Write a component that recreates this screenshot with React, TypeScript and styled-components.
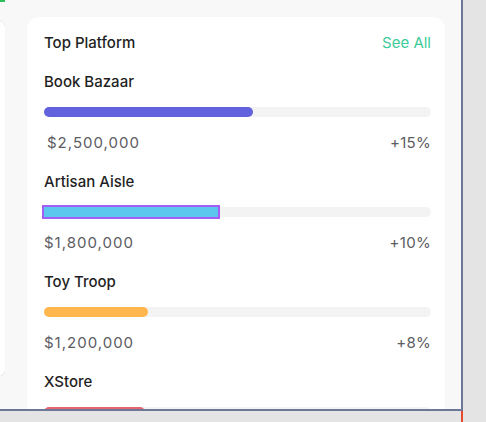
import React from "react";
import styled, { createGlobalStyle } from "styled-components";

const Global = createGlobalStyle`
  html, body { margin: 0; padding: 0; }
  body { background: #e4e4e4; font-family: Inter, "Noto Sans", sans-serif; }
`;

const Frame = styled.div`
  width: 461px;
  height: 409px;
  background: #f8f8f8;
  border-right: 2px solid #6e7797;
  border-bottom: 2px solid #6e7797;
  overflow: hidden;
  display: flex;
  align-items: flex-start;
  gap: 22px;
`;

const LeftCol = styled.div`
  width: 5px;
  flex: none;
  display: flex;
  flex-direction: column;
  overflow: hidden;
`;

const GreenTick = styled.div`
  width: 5px;
  height: 2px;
  background: #2fbf5a;
`;

const LeftCard = styled.div`
  margin-top: 18px;
  margin-left: -200px;
  width: 204px;
  height: 355px;
  background: #ffffff;
  border: 1px solid #e6e9f0;
  border-radius: 8px;
`;

const Card = styled.section`
  margin-top: 17px;
  width: 418px;
  flex: none;
  box-sizing: border-box;
  background: #ffffff;
  border-radius: 12px;
  padding: 16px 14px 40px 17px;
  display: flex;
  flex-direction: column;
  gap: 19px;
`;

const Header = styled.div`
  display: flex;
  justify-content: space-between;
  align-items: center;
  height: 20px;
`;

const Title = styled.h2`
  margin: 0;
  font-size: 15px;
  line-height: 20px;
  font-weight: 500;
  color: #1f1f24;
`;

const SeeAll = styled.a`
  font-size: 15px;
  line-height: 20px;
  font-weight: 400;
  color: #3dcb9a;
  text-decoration: none;
`;

const Item = styled.div`
  display: flex;
  flex-direction: column;
`;

const Name = styled.div`
  font-size: 15px;
  line-height: 20px;
  font-weight: 500;
  color: #1f1f24;
`;

const Track = styled.div`
  margin-top: 15px;
  height: 10px;
  background: #f3f3f4;
  border-radius: 5px;
`;

const Fill = styled.div<{ $color: string; $focused?: boolean }>`
  height: 100%;
  background: ${(p) => p.$color};
  border-radius: ${(p) => (p.$focused ? "0" : "5px")};
  outline: ${(p) => (p.$focused ? "2px solid #a45ef5" : "none")};
`;

const Stats = styled.div<{ $indent?: number }>`
  margin-top: 16px;
  display: flex;
  justify-content: space-between;
  font-size: 15px;
  line-height: 20px;
  color: #5c5c62;
  padding-left: ${(p) => p.$indent ?? 0}px;
`;

const Amount = styled.span`
  letter-spacing: 1px;
`;

const Change = styled.span`
  letter-spacing: 0.3px;
`;

const RedTick = styled.div`
  margin-left: 461px;
  width: 2px;
  height: 11px;
  background: #e8482c;
`;

type Platform = {
  name: string;
  amount?: string;
  change?: string;
  color: string;
  pct: number;
  indent?: number;
  focused?: boolean;
};

const items: Platform[] = [
  { name: "Book Bazaar", amount: "$2,500,000", change: "+15%", color: "#6262dd", pct: 209 / 387, indent: 3 },
  { name: "Artisan Aisle", amount: "$1,800,000", change: "+10%", color: "#5bc6ee", pct: 174 / 387, focused: true },
  { name: "Toy Troop", amount: "$1,200,000", change: "+8%", color: "#ffb74d", pct: 104 / 387 },
  { name: "XStore", color: "#e6656d", pct: 101 / 387 },
];

export default function App() {
  return (
    <>
      <Global />
      <Frame>
        <LeftCol>
          <GreenTick />
          <LeftCard />
        </LeftCol>
        <Card>
          <Header>
            <Title>Top Platform</Title>
            <SeeAll href="#">See All</SeeAll>
          </Header>
          {items.map((it) => (
            <Item key={it.name}>
              <Name>{it.name}</Name>
              <Track>
                <Fill $color={it.color} $focused={it.focused} style={{ width: `${it.pct * 100}%` }} />
              </Track>
              {it.amount && (
                <Stats $indent={it.indent}>
                  <Amount>{it.amount}</Amount>
                  <Change>{it.change}</Change>
                </Stats>
              )}
            </Item>
          ))}
        </Card>
      </Frame>
      <RedTick />
    </>
  );
}
